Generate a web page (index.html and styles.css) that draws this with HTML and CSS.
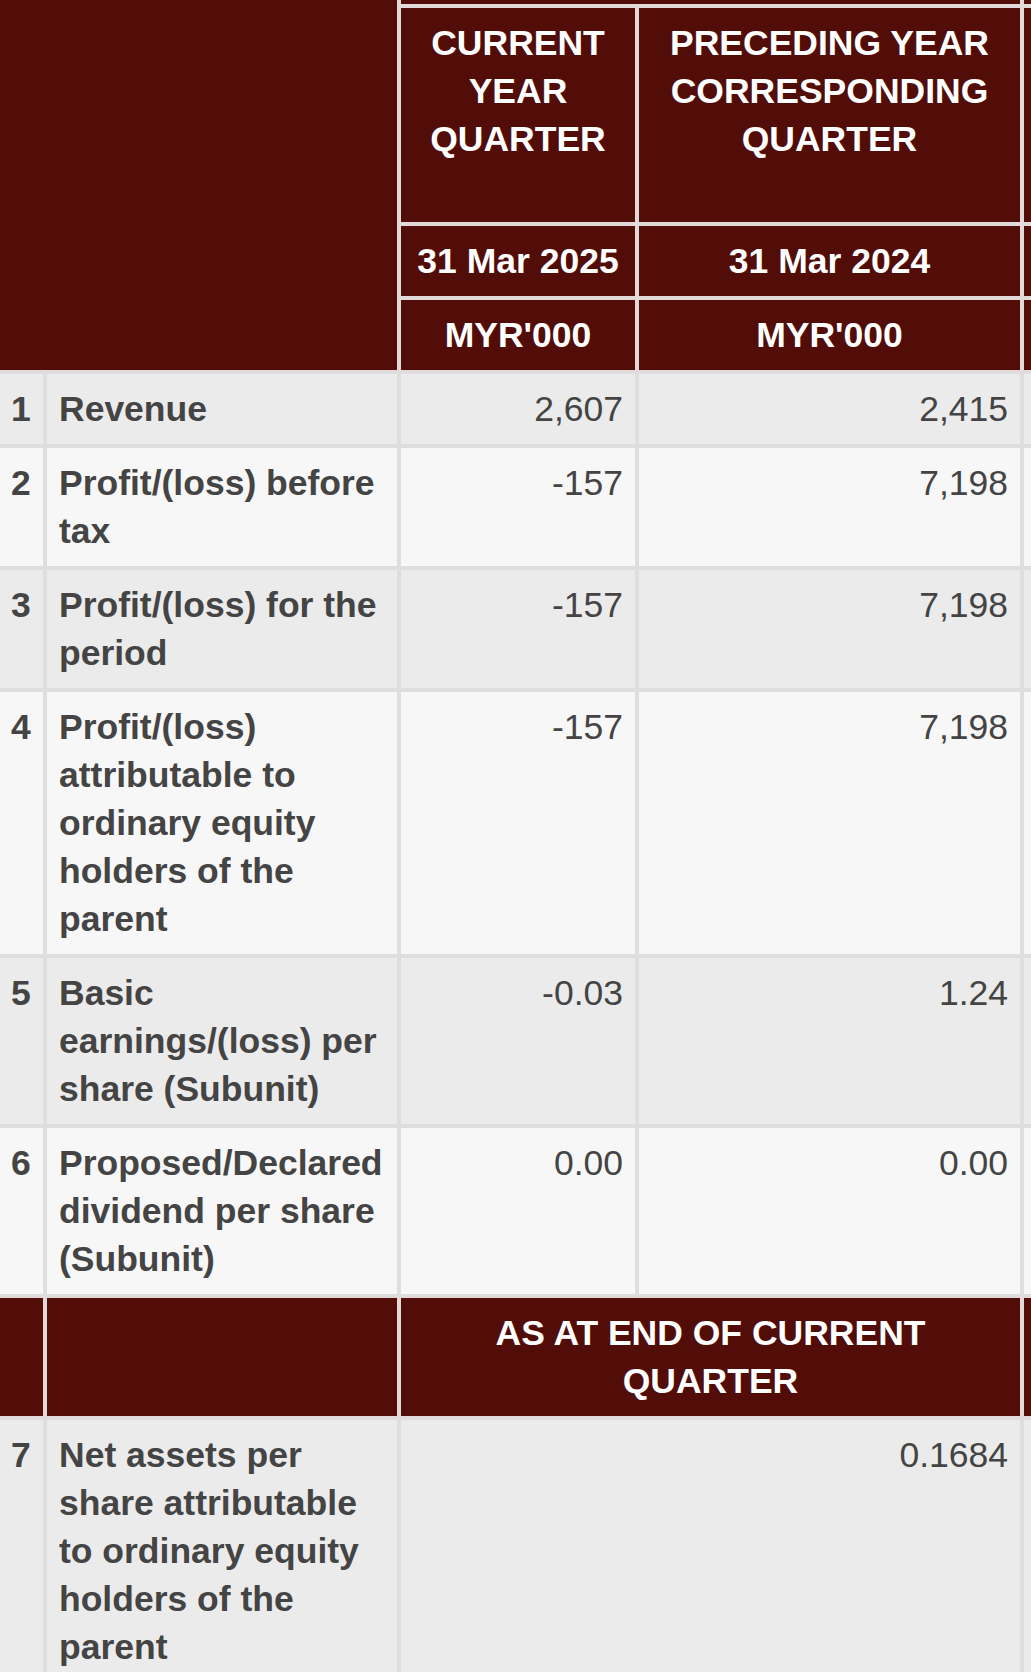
FILE: index.html
```html
<!DOCTYPE html>
<html lang="en">
<head>
<meta charset="utf-8">
<title>Financial Summary</title>
<link rel="stylesheet" href="styles.css">
</head>
<body>
<div class="frame">
  <table class="fin">
    <colgroup>
      <col class="c-num">
      <col class="c-label">
      <col class="c-cur">
      <col class="c-pre">
      <col class="c-cur">
      <col class="c-pre">
    </colgroup>
    <thead>
      <tr class="hd-top">
        <th class="hd" colspan="2" rowspan="4"></th>
        <th class="hd" colspan="2"></th>
        <th class="hd" colspan="2"></th>
      </tr>
      <tr class="hd-titles">
        <th class="hd">CURRENT YEAR QUARTER</th>
        <th class="hd">PRECEDING YEAR CORRESPONDING QUARTER</th>
        <th class="hd"></th>
        <th class="hd"></th>
      </tr>
      <tr>
        <th class="hd">31 Mar 2025</th>
        <th class="hd">31 Mar 2024</th>
        <th class="hd"></th>
        <th class="hd"></th>
      </tr>
      <tr>
        <th class="hd">MYR'000</th>
        <th class="hd">MYR'000</th>
        <th class="hd"></th>
        <th class="hd"></th>
      </tr>
    </thead>
    <tbody>
      <tr class="odd">
        <td class="num">1</td>
        <td class="label">Revenue</td>
        <td class="val">2,607</td>
        <td class="val">2,415</td>
        <td class="val"></td>
        <td class="val"></td>
      </tr>
      <tr class="even">
        <td class="num">2</td>
        <td class="label">Profit/(loss) before tax</td>
        <td class="val">-157</td>
        <td class="val">7,198</td>
        <td class="val"></td>
        <td class="val"></td>
      </tr>
      <tr class="odd">
        <td class="num">3</td>
        <td class="label">Profit/(loss) for the period</td>
        <td class="val">-157</td>
        <td class="val">7,198</td>
        <td class="val"></td>
        <td class="val"></td>
      </tr>
      <tr class="even">
        <td class="num">4</td>
        <td class="label">Profit/(loss) attributable to ordinary equity holders of the parent</td>
        <td class="val">-157</td>
        <td class="val">7,198</td>
        <td class="val"></td>
        <td class="val"></td>
      </tr>
      <tr class="odd">
        <td class="num">5</td>
        <td class="label">Basic earnings/(loss) per share (Subunit)</td>
        <td class="val">-0.03</td>
        <td class="val">1.24</td>
        <td class="val"></td>
        <td class="val"></td>
      </tr>
      <tr class="even">
        <td class="num">6</td>
        <td class="label">Proposed/Declared dividend per share (Subunit)</td>
        <td class="val">0.00</td>
        <td class="val">0.00</td>
        <td class="val"></td>
        <td class="val"></td>
      </tr>
      <tr>
        <th class="hd"></th>
        <th class="hd"></th>
        <th class="hd" colspan="2">AS AT END OF CURRENT QUARTER</th>
        <th class="hd" colspan="2"></th>
      </tr>
      <tr class="odd">
        <td class="num">7</td>
        <td class="label">Net assets per share attributable to ordinary equity holders of the parent</td>
        <td class="val" colspan="2">0.1684</td>
        <td class="val" colspan="2"></td>
      </tr>
    </tbody>
  </table>
</div>
</body>
</html>
```

FILE: styles.css
```css
html, body {
  margin: 0;
  padding: 0;
  background: #ffffff;
}

.frame {
  width: 1031px;
  height: 1672px;
  overflow: hidden;
}

.fin {
  table-layout: fixed;
  border-collapse: separate;
  border-spacing: 0;
  width: 1648px;
  margin: -68px 0 0 -3px;
  font-family: "Liberation Sans", Arial, Helvetica, sans-serif;
  font-size: 35.5px;
  line-height: 48px;
  color: #444444;
}

.c-num { width: 48px; }
.c-label { width: 354px; }
.c-cur { width: 238px; }
.c-pre { width: 385px; }

.fin th,
.fin td {
  border: 2px solid #dedede;
  padding: 11px 12px;
  vertical-align: top;
}

.fin .hd {
  background: #530d09;
  color: #ffffff;
  font-weight: bold;
  text-align: center;
  border-color: #e2dada;
}

.hd-top .hd {
  height: 48px;
}

.hd-titles .hd {
  height: 192px;
}

.odd td { background: #ebebeb; }
.even td { background: #f7f7f7; }

.num {
  font-weight: bold;
  text-align: left;
}

.label {
  font-weight: bold;
  padding-right: 8px;
}

.val {
  text-align: right;
  font-weight: normal;
  height: 48px;
}
```
